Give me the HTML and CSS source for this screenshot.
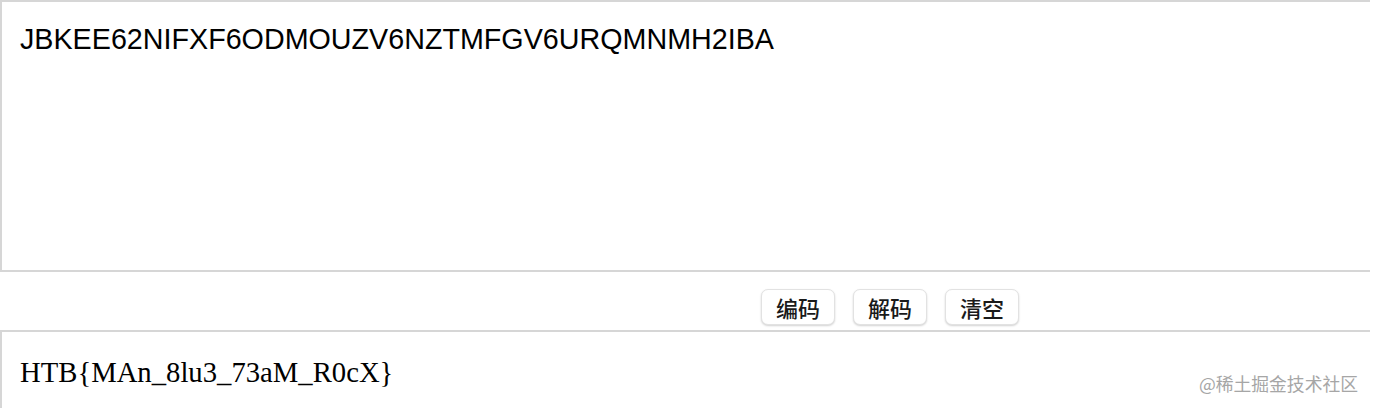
FILE: index.html
```html
<!DOCTYPE html>
<html lang="zh">
<head>
<meta charset="utf-8">
<title>Base32</title>
<link rel="stylesheet" href="styles.css">
</head>
<body>
<div class="page">
  <textarea class="box box-input" spellcheck="false">JBKEE62NIFXF6ODMOUZV6NZTMFGV6URQMNMH2IBA</textarea>
  <div class="actions">
    <button class="btn">编码</button>
    <button class="btn">解码</button>
    <button class="btn">清空</button>
  </div>
  <textarea class="box box-output" spellcheck="false">HTB{MAn_8lu3_73aM_R0cX}</textarea>
  <div class="watermark">@稀土掘金技术社区</div>
</div>
</body>
</html>
```

FILE: styles.css
```css
html, body {
  margin: 0;
  padding: 0;
  background: #ffffff;
  overflow: hidden;
}
.page {
  position: relative;
  width: 1374px;
  height: 408px;
  overflow: hidden;
  display: flex;
  flex-direction: column;
}
.box {
  display: block;
  flex-shrink: 0;
  box-sizing: border-box;
  width: 1370px;
  margin: 0;
  border: 2px solid #d6d6d6;
  border-right: none;
  border-radius: 0;
  background: #fff;
  color: #000;
  resize: none;
  outline: none;
  overflow: hidden;
  font-size: 28.7px;
  line-height: 33px;
}
.box-input {
  height: 272px;
  padding: 21px 18px 19px;
  font-family: "Liberation Sans", Arial, sans-serif;
}
.box-output {
  height: 140px;
  padding: 24px 18px;
  font-family: "Liberation Serif", "Times New Roman", serif;
}
.actions {
  display: flex;
  flex-shrink: 0;
  gap: 18px;
  padding: 17px 0 5px 761px;
}
.btn {
  box-sizing: border-box;
  width: 74px;
  height: 36px;
  padding: 0;
  border: 1px solid #e2e2e2;
  border-radius: 7px;
  background: #fff;
  box-shadow: 0 1px 2px rgba(0, 0, 0, 0.18);
  color: #1a1a1a;
  font-family: "Noto Sans CJK SC", sans-serif;
  font-weight: 500;
  font-size: 22px;
  line-height: 34px;
}
.watermark {
  position: absolute;
  right: 16px;
  top: 371px;
  font-family: "Noto Sans CJK SC", sans-serif;
  font-size: 17.8px;
  line-height: 24px;
  color: #a6a6a6;
}
```
